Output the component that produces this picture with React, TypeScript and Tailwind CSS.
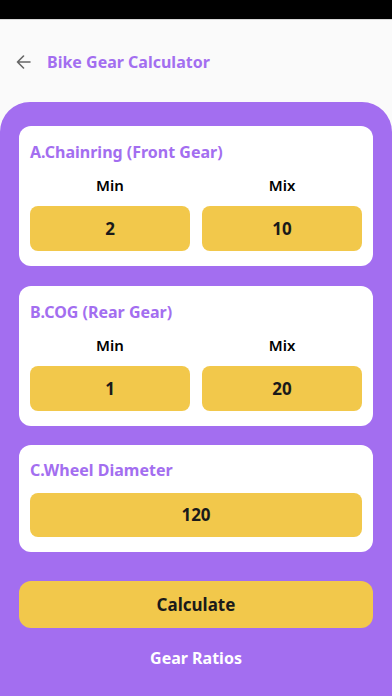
import React from 'react'

const font = { fontFamily: '"Noto Sans", "Liberation Sans", sans-serif' }

function Box({ value }: { value: string }) {
  return (
    <div className="h-[45px] rounded-lg bg-[#f2c84b] flex items-center justify-center text-[17px] font-bold text-[#1a1a1a]">
      {value}
    </div>
  )
}

function RangeCard({ title, min, max }: { title: string; min: string; max: string }) {
  return (
    <div className="bg-white rounded-xl px-[11px] pt-4 pb-[15px]">
      <div className="h-5 flex items-center text-[16px] font-bold text-[#a36ef0] leading-5">{title}</div>
      <div className="grid grid-cols-2 gap-3 mt-[13px]">
        <div>
          <div className="h-5 flex items-center justify-center text-[15px] font-semibold text-black">Min</div>
          <div className="mt-[11px]"><Box value={min} /></div>
        </div>
        <div>
          <div className="h-5 flex items-center justify-center text-[15px] font-semibold text-black">Mix</div>
          <div className="mt-[11px]"><Box value={max} /></div>
        </div>
      </div>
    </div>
  )
}

export default function App() {
  return (
    <div className="w-[392px] h-[696px] overflow-hidden bg-[#fafafa] flex flex-col" style={font}>
      {/* статус-бар */}
      <div className="h-[19px] bg-black shrink-0" />
      <div className="h-px bg-[#d8d8d8] shrink-0" />

      {/* шапка */}
      <div className="h-[82px] shrink-0 flex items-center px-4 gap-4 pt-[2px]">
        <svg width="15" height="14" viewBox="0 0 15 14" fill="none" stroke="#666" strokeWidth="1.6" strokeLinecap="round" strokeLinejoin="round">
          <path d="M14 7H1.5M7.5 1L1.5 7l6 6" />
        </svg>
        <span className="text-[16px] font-bold text-[#a36ef0]">Bike Gear Calculator</span>
      </div>

      {/* фиолетовая панель */}
      <div className="flex-1 bg-[#a36ef0] rounded-t-[30px] px-[19px] pt-6">
        <RangeCard title="A.Chainring (Front Gear)" min="2" max="10" />
        <div className="mt-5">
          <RangeCard title="B.COG (Rear Gear)" min="1" max="20" />
        </div>

        <div className="mt-[19px] bg-white rounded-xl px-[11px] pt-[15px] pb-[15px]">
          <div className="h-5 flex items-center text-[16px] font-bold text-[#a36ef0]">C.Wheel Diameter</div>
          <div className="mt-[13px] h-[44px] rounded-lg bg-[#f2c84b] flex items-center justify-center text-[17px] font-bold text-[#1a1a1a]">
            120
          </div>
        </div>

        <button className="mt-[29px] w-full h-[47px] rounded-xl bg-[#f2c84b] text-[17px] font-bold text-[#1a1a1a]">
          Calculate
        </button>

        <div className="mt-[18px] text-center text-[16px] font-bold text-white">Gear Ratios</div>
      </div>
    </div>
  )
}
